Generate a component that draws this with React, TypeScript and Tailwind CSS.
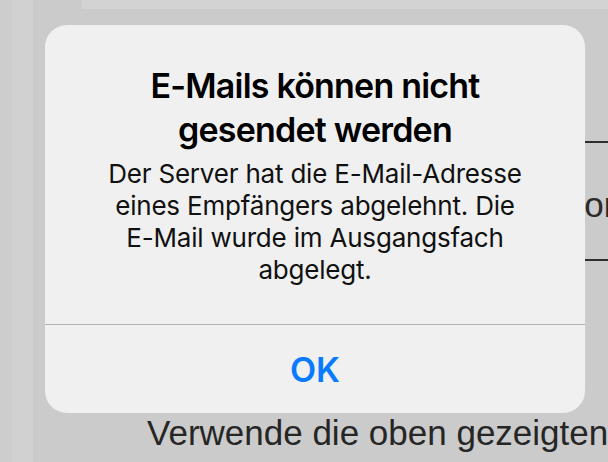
export default function App() {
  return (
    <div
      className="relative flex h-[462px] w-[608px] overflow-hidden bg-[#cbcbcb]"
      style={{ fontFamily: 'Inter, "Noto Sans", sans-serif' }}
    >
      {/* page behind the alert */}
      <div className="flex w-[33px] shrink-0">
        <div className="w-[12px] bg-[#cdcdcd]" />
        <div className="flex-1 bg-[#d1d1d1]" />
      </div>
      <div className="flex flex-1 flex-col">
        <div className="ml-[49px] h-[9px] bg-[#d3d3d3]" />
        <div className="mt-[132px] ml-[552px] flex h-[120px] w-[200px] shrink-0 items-center border-y-2 border-[#2e2e2e]">
          <span
            className="mt-[6px] -ml-[24px] text-[35px] leading-none text-[#2a2a2a]"
            style={{ fontFamily: '"Liberation Sans", Arial, sans-serif' }}
          >
            Port
          </span>
        </div>
        <p
          className="mt-[154px] ml-[114px] whitespace-nowrap text-[35px] leading-none text-[#262626]"
          style={{ fontFamily: '"Liberation Sans", Arial, sans-serif' }}
        >
          Verwende die oben gezeigten
        </p>
      </div>

      {/* alert */}
      <div className="absolute top-[25px] left-[45px] flex h-[388px] w-[540px] flex-col rounded-[22px] bg-[#f0f0f0]">
        <div className="flex flex-1 flex-col items-center px-6 pt-[39px] text-center">
          <h2 className="text-[34px] leading-[44px] font-semibold tracking-[-0.8px] text-black">
            E-Mails können nicht
            <br />
            gesendet werden
          </h2>
          <p className="mt-[6px] text-[26px] leading-[32px] tracking-[-0.2px] text-[#111]">
            Der Server hat die E-Mail-Adresse
            <br />
            eines Empfängers abgelehnt. Die
            <br />
            E-Mail wurde im Ausgangsfach
            <br />
            abgelegt.
          </p>
        </div>
        <div className="h-px bg-[#b3b3b3]" />
        <button
          type="button"
          className="flex h-[88px] items-center justify-center text-[34px] font-semibold text-[#0a7aff]"
        >
          OK
        </button>
      </div>
    </div>
  )
}
